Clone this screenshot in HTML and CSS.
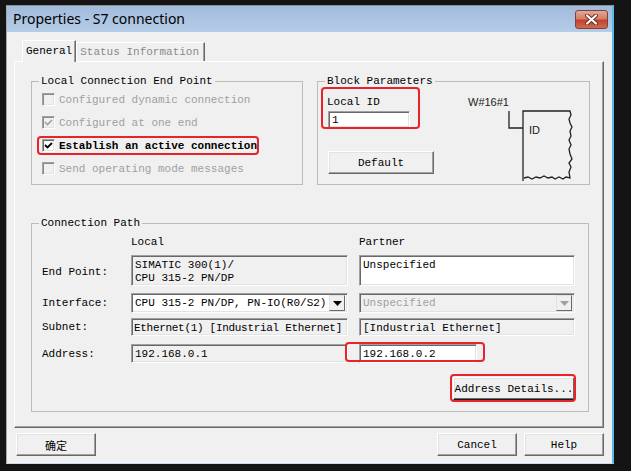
FILE: index.html
```html
<!DOCTYPE html>
<html>
<head>
<meta charset="utf-8">
<title>Properties - S7 connection</title>
<link rel="stylesheet" href="styles.css">
</head>
<body>
<div class="window">
  <div class="titlebar">
    <span class="title">Properties - S7 connection</span>
    <div class="close">
      <svg width="15" height="11" viewBox="0 0 15 11"><path d="M3 1.5 L12 9.5 M12 1.5 L3 9.5" stroke="#6a2a24" stroke-width="4" stroke-linecap="round"/><path d="M3 1.5 L12 9.5 M12 1.5 L3 9.5" stroke="#ffffff" stroke-width="2.2" stroke-linecap="round"/></svg>
    </div>
  </div>
  <div class="client">
    <div class="tabs">
      <div class="tab active">General</div>
      <div class="tab inactive">Status Information</div>
    </div>
    <div class="panel">
      <div class="top-row">
        <fieldset class="group g-local">
          <legend>Local Connection End Point</legend>
          <div class="checks">
            <div class="check disabled"><span class="box"></span>Configured dynamic connection</div>
            <div class="check disabled"><span class="box"><svg width="11" height="11" viewBox="0 0 11 11"><path d="M2 5 L4.5 7.5 L9 3" fill="none" stroke="#a0a0a0" stroke-width="1.6"/></svg></span>Configured at one end</div>
            <div class="check on"><span class="box"><svg width="11" height="11" viewBox="0 0 11 11"><path d="M2 5 L4.5 7.5 L9 3" fill="none" stroke="#000" stroke-width="1.8"/></svg></span>Establish an active connection</div>
            <div class="check disabled"><span class="box"></span>Send operating mode messages</div>
          </div>
        </fieldset>
        <fieldset class="group g-block">
          <legend>Block Parameters</legend>
          <div class="block-body">
            <div class="block-left">
              <div class="lbl">Local ID</div>
              <div class="field white id-input">1</div>
              <div class="btn btn-default">Default</div>
            </div>
            <div class="block-right">
              <div class="wtext">W#16#1</div>
              <svg class="diagram" width="110" height="74" viewBox="0 0 110 74">
                <path d="M41 2 L41 19 L55 19" fill="none" stroke="#222" stroke-width="1.3"/>
                <path d="M55 72 L55 2 L102 2 L103 6 L101 10 L102 14 L104 18 L102 22 L103 27 L101 31 L103 36 L101 40 L102 45 L104 50 L101 54 L103 58 L101 63 L102 69 L98 68 L95 70 L91 68 L87 70 L84 68 L80 69 L76 67 L72 69 L68 68 L64 70 L60 68 L56 69" fill="none" stroke="#222" stroke-width="1.3"/>
                <text x="61" y="25" font-family="Liberation Sans, Arial, sans-serif" font-size="11" fill="#222">ID</text>
              </svg>
            </div>
          </div>
        </fieldset>
      </div>
      <fieldset class="group g-path">
        <legend>Connection Path</legend>
        <div class="prow head">
          <div></div>
          <div>Local</div>
          <div>Partner</div>
        </div>
        <div class="prow endpoint">
          <div class="plabel">End Point:</div>
          <div class="field grey multi">SIMATIC 300(1)/<br>CPU 315-2 PN/DP</div>
          <div class="field white multi">Unspecified</div>
        </div>
        <div class="prow iface">
          <div class="plabel">Interface:</div>
          <div class="field white select"><span class="stext">CPU 315-2 PN/DP, PN-IO(R0/S2)</span><span class="arrow"><svg width="9" height="5" viewBox="0 0 9 5"><path d="M0 0 L9 0 L4.5 5 Z" fill="#000"/></svg></span></div>
          <div class="field grey select disabled"><span class="stext">Unspecified</span><span class="arrow"><svg width="9" height="5" viewBox="0 0 9 5"><path d="M0 0 L9 0 L4.5 5 Z" fill="#a0a0a0"/></svg></span></div>
        </div>
        <div class="prow subnet">
          <div class="plabel">Subnet:</div>
          <div class="field grey single tight">Ethernet(1) [Industrial Ethernet]</div>
          <div class="field grey single">[Industrial Ethernet]</div>
        </div>
        <div class="prow address">
          <div class="plabel">Address:</div>
          <div class="field grey single">192.168.0.1</div>
          <div class="field white single short">192.168.0.2</div>
        </div>
        <div class="details-row">
          <div class="btn btn-details">Address Details...</div>
        </div>
      </fieldset>
    </div>
    <div class="buttons">
      <div class="btn btn-bottom">确定</div>
      <div class="spacer"></div>
      <div class="btn btn-bottom">Cancel</div>
      <div class="btn btn-bottom">Help</div>
    </div>
  </div>
</div>
<div class="mark m-establish"></div>
<div class="mark m-localid"></div>
<div class="mark m-address"></div>
<div class="mark m-details"></div>
</body>
</html>
```

FILE: styles.css
```css
html, body {
  margin: 0;
  padding: 0;
}
body {
  background: #141414;
  padding: 5px 0 0 6px;
  font-family: "Liberation Mono", "Courier New", monospace;
  font-size: 11px;
  color: #000;
}
.window {
  box-sizing: border-box;
  width: 608px;
  height: 459px;
  border-top: 1px solid #8e8e8e;
  border-left: 1px solid #a8a8a8;
  border-right: 2px solid #5ab9e8;
  border-bottom: 1px solid #c8d8e8;
  background: #f0f0f0;
  display: flex;
  flex-direction: column;
}
.titlebar {
  height: 26px;
  flex: none;
  background: linear-gradient(to bottom, #a1bbdb, #b6cde8);
  display: flex;
  align-items: center;
  padding: 0 4px 0 6px;
}
.title {
  font-family: "Noto Sans", "Open Sans", sans-serif;
  font-size: 14px;
  color: #000;
  flex: 1;
  margin-top: -1px;
}
.close {
  width: 33px;
  height: 19px;
  box-sizing: border-box;
  border: 1px solid #7b4240;
  border-radius: 3px;
  background: linear-gradient(to bottom, #e4a898 0%, #d87e68 45%, #c0442c 55%, #d26a50 100%);
  display: flex;
  align-items: center;
  justify-content: center;
  margin-top: 1px;
}
.client {
  flex: 1;
  padding: 8px 8px 0 7px;
  display: flex;
  flex-direction: column;
}
.tabs {
  display: flex;
  height: 21px;
  padding-left: 8px;
  position: relative;
  z-index: 1;
}
.tab {
  box-sizing: border-box;
  padding: 0 3px 0 3px;
  line-height: 18px;
  white-space: nowrap;
  border-top: 1px solid #fff;
  border-left: 1px solid #fff;
  border-right: 1px solid #696969;
  box-shadow: inset -1px 0 0 #a0a0a0;
}
.tab.active {
  height: 22px;
  background: #f0f0f0;
  padding-top: 1px;
  color: #000;
}
.tab.inactive {
  height: 19px;
  margin-top: 2px;
  padding-right: 5px;
  color: #8a8a8a;
}
.panel {
  box-sizing: border-box;
  height: 367px;
  border-top: 1px solid #fff;
  border-left: 1px solid #fff;
  border-right: 1px solid #696969;
  border-bottom: 1px solid #696969;
  box-shadow: inset -1px -1px 0 #a0a0a0;
  padding: 13px 0 0 16px;
}
.top-row {
  display: flex;
  gap: 14px;
}
.group {
  margin: 0;
  padding: 0;
  min-width: 0;
  border: 1px solid #bcbcbc;
  box-sizing: border-box;
}
.group legend {
  padding: 0 2px;
  margin-left: 7px;
  line-height: 13px;
  height: 13px;
}
.g-local {
  width: 272px;
}
.checks {
  padding: 0 0 3px 10px;
}
.check {
  height: 23px;
  display: flex;
  align-items: center;
  white-space: nowrap;
}
.check .box {
  box-sizing: border-box;
  width: 13px;
  height: 13px;
  margin-right: 4px;
  border: 1px solid;
  border-color: #a0a0a0 #fff #fff #a0a0a0;
  box-shadow: inset 1px 1px 0 #8a8a8a, inset -1px -1px 0 #e3e3e3;
  background: #f0f0f0;
  display: flex;
  align-items: center;
  justify-content: center;
}
.check.disabled {
  color: #a0a0a0;
}
.check.on {
  font-weight: bold;
}
.check.on .box {
  background: #fff;
  box-shadow: inset 1px 1px 0 #696969, inset -1px -1px 0 #e3e3e3;
}
.g-block {
  width: 273px;
  height: 110px;
}
.block-body {
  display: flex;
  padding-left: 9px;
}
.block-left {
  width: 106px;
  display: flex;
  flex-direction: column;
  align-items: flex-start;
}
.lbl {
  margin-top: 8px;
  line-height: 13px;
}
.field {
  box-sizing: border-box;
  border: 1px solid;
  border-color: #a0a0a0 #fff #fff #a0a0a0;
  box-shadow: inset 1px 1px 0 #696969, inset -1px -1px 0 #e3e3e3;
  padding: 2px 3px;
  line-height: 13px;
  white-space: nowrap;
  overflow: hidden;
}
.field.white {
  background: #fff;
}
.field.grey {
  background: #f0f0f0;
}
.field.tight {
  letter-spacing: -0.3px;
  padding-left: 2px;
}
.id-input {
  width: 82px;
  height: 17px;
  margin-top: 2px;
  margin-left: 1px;
  padding: 2px 3px 0 3px;
}
.btn {
  box-sizing: border-box;
  background: #f0f0f0;
  border: 1px solid;
  border-color: #fff #696969 #696969 #fff;
  box-shadow: inset -1px -1px 0 #a0a0a0, inset 1px 1px 0 #e3e3e3;
  display: flex;
  align-items: center;
  justify-content: center;
  white-space: nowrap;
  overflow: hidden;
}
.btn-default {
  width: 106px;
  height: 23px;
  margin-top: 23px;
  margin-left: 1px;
}
.block-right {
  margin-left: 35px;
  display: flex;
  flex-direction: column;
}
.wtext {
  font-family: "Liberation Sans", Arial, sans-serif;
  font-size: 11px;
  line-height: 13px;
  margin-top: 8px;
  color: #222;
}
.diagram {
  display: block;
}
.g-path {
  width: 558px;
  margin-top: 32px;
  padding: 0 0 11px 0;
}
.prow {
  display: grid;
  grid-template-columns: 99px 228px 216px;
  align-items: center;
}
.plabel {
  padding-left: 10px;
}
.prow.head {
  margin-top: 5px;
  height: 14px;
  line-height: 14px;
}
.prow.endpoint {
  margin-top: 6px;
  height: 31px;
}
.prow.endpoint .field {
  height: 31px;
  padding-top: 3px;
}
.prow.endpoint .plabel {
  margin-top: 3px;
}
.prow .field {
  width: 217px;
}
.prow > div:nth-child(3) {
  width: 216px;
}
.prow.iface {
  margin-top: 7px;
  height: 20px;
}
.select {
  height: 20px;
  display: flex;
  align-items: center;
  padding: 0 2px 0 3px;
}
.select .stext {
  flex: 1;
  overflow: hidden;
}
.select.disabled {
  color: #a0a0a0;
}
.arrow {
  box-sizing: border-box;
  width: 16px;
  height: 16px;
  background: #f0f0f0;
  border: 1px solid;
  border-color: #e3e3e3 #696969 #696969 #e3e3e3;
  display: flex;
  align-items: center;
  justify-content: center;
}
.prow.subnet {
  margin-top: 5px;
  height: 18px;
}
.prow.subnet .field {
  height: 18px;
}
.prow.address {
  margin-top: 8px;
  height: 19px;
}
.prow.address .field {
  height: 19px;
}
.prow.address .field.short {
  width: 118px;
}
.single {
  padding-top: 3px;
}
.details-row {
  display: flex;
  justify-content: flex-end;
  padding-right: 13px;
  margin-top: 14px;
}
.btn-details {
  width: 122px;
  height: 23px;
  border-color: #fff #1a1a1a #1a1a1a #fff;
  box-shadow: inset -1px -1px 0 #696969, inset 1px 1px 0 #e3e3e3;
}
.buttons {
  display: flex;
  margin-top: 5px;
  padding-left: 2px;
  gap: 7px;
}
.spacer {
  flex: 1;
}
.btn-bottom {
  width: 80px;
  height: 23px;
  font-family: "Liberation Mono", "Noto Sans CJK SC", monospace;
}
.mark {
  position: absolute;
  box-sizing: border-box;
  border: 2px solid #e8242a;
  border-radius: 4px;
}
.m-establish {
  left: 37px;
  top: 136px;
  width: 222px;
  height: 19px;
}
.m-localid {
  left: 321px;
  top: 87px;
  width: 99px;
  height: 42px;
}
.m-address {
  left: 345px;
  top: 342px;
  width: 140px;
  height: 20px;
}
.m-details {
  left: 450px;
  top: 374px;
  width: 126px;
  height: 28px;
}
```
